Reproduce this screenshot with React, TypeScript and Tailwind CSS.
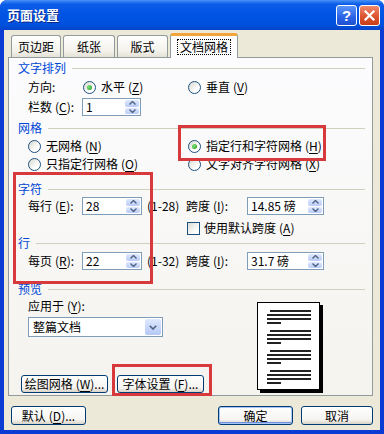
import React from 'react';

// mnemonic like (Z) with the letter underlined
const Mn = ({ k }: { k: string }) => (
  <span className="ml-[3px]">
    (<span className="underline underline-offset-[2px]">{k}</span>)
  </span>
);

const Radio = ({ label, k, checked = false, className = '' }: { label: string; k: string; checked?: boolean; className?: string }) => (
  <div className={`flex items-center h-[18px] ${className}`}>
    <span className="w-[13px] h-[13px] rounded-full border border-[#1c5180] bg-[linear-gradient(135deg,#d8d8d0,#ffffff_70%)] flex items-center justify-center shrink-0">
      {checked && <span className="w-[5px] h-[5px] rounded-full bg-[radial-gradient(circle_at_35%_35%,#7fe27a,#1f9a1f)]" />}
    </span>
    <span className="ml-[5px] whitespace-nowrap">
      {label}
      <Mn k={k} />
    </span>
  </div>
);

const Arrow = ({ up }: { up: boolean }) => (
  <svg width="7" height="4" viewBox="0 0 7 4">
    <path d={up ? 'M0.5 3.5 L3.5 0.5 L6.5 3.5' : 'M0.5 0.5 L3.5 3.5 L6.5 0.5'} fill="none" stroke="#4d6185" strokeWidth="1.4" />
  </svg>
);

const Spin = ({ value, className = '' }: { value: string; className?: string }) => (
  <div className={`h-[18px] border border-[#7f9db9] bg-white flex items-stretch ${className}`}>
    <span className="flex-1 pl-[3px] leading-[16px]">{value}</span>
    <div className="w-[14px] my-[1px] mr-[1px] flex flex-col gap-[1px]">
      <span className="flex-1 rounded-[2px] bg-[linear-gradient(#dfe8fd,#b9cbf6)] flex items-center justify-center">
        <Arrow up />
      </span>
      <span className="flex-1 rounded-[2px] bg-[linear-gradient(#dfe8fd,#b9cbf6)] flex items-center justify-center">
        <Arrow up={false} />
      </span>
    </div>
  </div>
);

const Group = ({ title, className = '' }: { title: string; className?: string }) => (
  <div className={`flex items-center h-[14px] ml-[9px] mr-[7px] ${className}`}>
    <span className="text-[#0046d5] whitespace-nowrap">{title}</span>
    <span className="flex-1 h-px bg-[#d0d0bf] ml-[6px]" />
  </div>
);

const Btn = ({ children, className = '', def = false }: { children: React.ReactNode; className?: string; def?: boolean }) => (
  <div
    className={`h-[18px] rounded-[3px] border border-[#003c74] bg-[linear-gradient(#ffffff,#f5f4f0_75%,#d8d2c6)] flex items-center justify-center whitespace-nowrap ${
      def ? 'shadow-[inset_0_0_0_1px_#a9c5f5,inset_0_-1px_0_1px_#6c8fe0]' : ''
    } ${className}`}
  >
    {children}
  </div>
);

const PreviewPage = () => (
  <div className="w-[63px] h-[88px] bg-white border border-black shadow-[3px_3px_0_#000] pt-[7px] pl-[9px] flex flex-col gap-[6px]">
    {[0, 1, 2, 3].map((g) => (
      <div key={g} className="flex flex-col gap-[2px]">
        <span className="h-[2px] w-[41px] ml-[3px] bg-[#222]" />
        <span className="h-[2px] w-[44px] bg-[#222]" />
        <span className="h-[2px] w-[44px] bg-[#222]" />
        <span className="h-[2px] w-[14px] bg-[#222]" />
      </div>
    ))}
  </div>
);

const Tab = ({ label, className = '' }: { label: string; className?: string }) => (
  <div
    className={`h-[22px] rounded-t-[3px] border border-b-0 border-[#919b9c] bg-[linear-gradient(#ffffff,#f3f2ec_70%,#e4e1d6)] flex items-center justify-center ${className}`}
  >
    {label}
  </div>
);

export default function App() {
  return (
    <div className="w-[384px] h-[434px] bg-[#0a3cd4] rounded-t-[7px] overflow-hidden text-[12px] leading-[14px] text-black [font-family:'Noto_Sans_CJK_SC','Liberation_Sans',sans-serif]">
      {/* title bar */}
      <div className="h-[30px] flex items-center pl-[7px] pr-[4px] bg-[linear-gradient(#4a92f6_0%,#0b5ce9_14%,#0054e3_50%,#0050dc_85%,#0843c9_100%)]">
        <span className="flex-1 text-white font-bold text-[13px] [text-shadow:1px_1px_0_#0a2a8a]">页面设置</span>
        <div className="flex gap-[2px] mt-[1px]">
          <div className="w-[21px] h-[21px] rounded-[3px] border border-white bg-[linear-gradient(#5c95f8,#2a62e6_60%,#1f4fd0)] flex items-center justify-center text-white font-bold text-[15px] [font-family:'Liberation_Sans',sans-serif]">
            ?
          </div>
          <div className="w-[21px] h-[21px] rounded-[3px] border border-white bg-[linear-gradient(#f08a6c,#dc5530_55%,#c73d17)] flex items-center justify-center">
            <svg width="11" height="11" viewBox="0 0 11 11">
              <path d="M1.5 1.5 L9.5 9.5 M9.5 1.5 L1.5 9.5" stroke="#fff" strokeWidth="2.2" strokeLinecap="square" />
            </svg>
          </div>
        </div>
      </div>

      {/* body */}
      <div className="ml-[4px] mr-[4px] h-[400px] bg-[#ece9d8]">
        {/* tabs */}
        <div className="flex items-end h-[27px] ml-[7px] gap-[2px]">
          <Tab label="页边距" className="w-[50px]" />
          <Tab label="纸张" className="w-[52px]" />
          <Tab label="版式" className="w-[51px]" />
          <div className="relative z-10 -mb-px h-[25px] w-[68px] rounded-t-[3px] border border-b-0 border-[#919b9c] border-t-[3px] border-t-[#f1a43a] bg-[#fcfcfe] flex items-center justify-center">
            <span className="border border-dotted border-black px-[2px] leading-[14px]">文档网格</span>
          </div>
        </div>

        {/* panel */}
        <div className="relative ml-[4px] mr-[7px] h-[339px] border border-[#919b9c] bg-[linear-gradient(#fcfcfe,#f4f3ee)] pt-[3px]">
          <Group title="文字排列" />
          <div className="flex items-center h-[18px] ml-[19px] mt-[3px]">
            <span className="w-[55px]">方向:</span>
            <Radio label="水平" k="Z" checked className="w-[105px]" />
            <Radio label="垂直" k="V" />
          </div>
          <div className="flex items-center h-[18px] ml-[19px] mt-[2px]">
            <span className="w-[54px] whitespace-nowrap">
              栏数<Mn k="C" />:
            </span>
            <Spin value="1" className="w-[59px]" />
          </div>

          <Group title="网格" className="mt-[5px]" />
          <div className="flex items-center ml-[19px] mt-[2px]">
            <Radio label="无网格" k="N" className="w-[160px]" />
            <Radio label="指定行和字符网格" k="H" checked />
          </div>
          <div className="flex items-center ml-[19px]">
            <Radio label="只指定行网格" k="O" className="w-[160px]" />
            <Radio label="文字对齐字符网格" k="X" />
          </div>

          <Group title="字符" className="mt-[9px]" />
          <div className="flex items-center h-[18px] ml-[19px] mt-[1px]">
            <span className="w-[54px] whitespace-nowrap">
              每行<Mn k="E" />:
            </span>
            <Spin value="28" className="w-[60px]" />
            <span className="ml-[5px] w-[39px]">(1-28)</span>
            <span className="w-[61px] whitespace-nowrap">
              跨度<Mn k="I" />:
            </span>
            <Spin value="14.85 磅" className="w-[77px]" />
          </div>
          <div className="flex items-center h-[16px] ml-[178px] mt-[5px]">
            <span className="w-[13px] h-[13px] border border-[#1c5180] bg-[linear-gradient(135deg,#dcdcd5,#ffffff_75%)]" />
            <span className="ml-[4px] whitespace-nowrap">
              使用默认跨度<Mn k="A" />
            </span>
          </div>

          <Group title="行" />
          <div className="flex items-center h-[18px] ml-[19px] mt-[2px]">
            <span className="w-[54px] whitespace-nowrap">
              每页<Mn k="R" />:
            </span>
            <Spin value="22" className="w-[60px]" />
            <span className="ml-[5px] w-[39px]">(1-32)</span>
            <span className="w-[61px] whitespace-nowrap">
              跨度<Mn k="I" />:
            </span>
            <Spin value="31.7 磅" className="w-[77px]" />
          </div>

          <Group title="预览" className="mt-[12px]" />
          <div className="flex">
            <div className="w-[229px] pl-[19px] flex flex-col">
              <span className="h-[14px] mt-[3px] whitespace-nowrap">
                应用于<Mn k="Y" />:
              </span>
              <div className="mt-[4px] w-[135px] h-[20px] border border-[#7f9db9] bg-white flex items-stretch">
                <span className="flex-1 pl-[4px] leading-[18px]">整篇文档</span>
                <span className="w-[16px] m-[1px] rounded-[2px] bg-[linear-gradient(#dfe8fd,#b4c8f6)] flex items-center justify-center">
                  <svg width="8" height="5" viewBox="0 0 8 5">
                    <path d="M0.8 0.8 L4 4 L7.2 0.8" fill="none" stroke="#4d6185" strokeWidth="1.6" />
                  </svg>
                </span>
              </div>
              <div className="flex gap-[9px] mt-[38px] -ml-[7px]">
                <Btn className="w-[87px]">
                  绘图网格<Mn k="W" />...
                </Btn>
                <Btn className="w-[87px]">
                  字体设置<Mn k="F" />...
                </Btn>
              </div>
            </div>
            <div className="ml-[19px] mt-[6px]">
              <PreviewPage />
            </div>
          </div>

          {/* red annotation boxes */}
          <div className="absolute left-[169px] top-[67px] w-[148px] h-[36px] border-[3px] border-[#d8393c]" />
          <div className="absolute left-[4px] top-[114px] w-[140px] h-[112px] border-[3px] border-[#d8393c]" />
          <div className="absolute left-[103px] top-[306px] w-[100px] h-[32px] border-[3px] border-[#d8393c]" />
        </div>

        {/* bottom buttons */}
        <div className="flex items-center mt-[10px] h-[19px]">
          <Btn className="ml-[7px] w-[75px] h-[19px]">
            默认<Mn k="D" />...
          </Btn>
          <Btn def className="ml-[132px] w-[75px] h-[19px]">
            确定
          </Btn>
          <Btn className="ml-[8px] w-[72px] h-[19px]">取消</Btn>
        </div>
      </div>
    </div>
  );
}
